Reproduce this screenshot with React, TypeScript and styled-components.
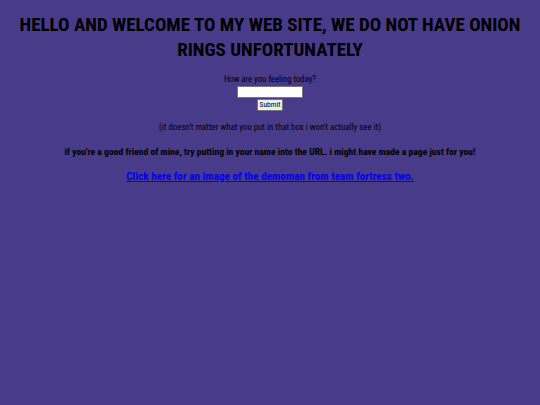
import React from 'react';
import styled, { createGlobalStyle } from 'styled-components';

const GlobalStyle = createGlobalStyle`
  html, body {
    margin: 0;
    padding: 0;
    background-color: #483b8a;
  }
  body {
    font-family: Roboto, 'DejaVu Sans', sans-serif;
    font-stretch: condensed;
    color: #000;
  }
`;

const Page = styled.main`
  min-height: 405px;
  padding: 12px 8px 0;
  text-align: center;
`;

const Title = styled.h1`
  margin: 0 0 12px;
  font-size: 19px;
  font-weight: bold;
  line-height: 25px;
`;

const Form = styled.form`
  display: flex;
  flex-direction: column;
  align-items: center;
  gap: 1px;
`;

const Prompt = styled.label`
  font-size: 8.7px;
  line-height: 11px;
`;

const TextBox = styled.input`
  box-sizing: border-box;
  width: 66px;
  height: 12px;
  margin: 0;
  padding: 0 2px;
  border: 1px solid #767676;
  background: #fff;
  font-size: 8px;
`;

const SubmitButton = styled.button`
  box-sizing: border-box;
  height: 12px;
  margin: 0;
  padding: 0 2px;
  border: 1px solid #767676;
  border-radius: 1px;
  background: #efefef;
  font-family: inherit;
  font-stretch: condensed;
  font-size: 7.5px;
  line-height: 10px;
  color: #000;
`;

const Note = styled.p`
  margin: 11px 0 0;
  font-size: 8.85px;
  line-height: 11px;
`;

const Friend = styled.p`
  margin: 13px 0 0;
  font-size: 9.6px;
  font-weight: bold;
  line-height: 11px;
`;

const DemoLink = styled.a`
  display: inline-block;
  margin-top: 13px;
  font-size: 11.2px;
  font-weight: bold;
  line-height: 13px;
  color: #0000ee;
  text-decoration: underline;
`;

const App = () => (
  <>
    <GlobalStyle />
    <Page>
      <Title>HELLO AND WELCOME TO MY WEB SITE, WE DO NOT HAVE ONION RINGS UNFORTUNATELY</Title>
      <Form onSubmit={e => e.preventDefault()}>
        <Prompt htmlFor="feeling">How are you feeling today?</Prompt>
        <TextBox id="feeling" type="text" />
        <SubmitButton type="submit">Submit</SubmitButton>
      </Form>
      <Note>(it doesn't matter what you put in that box i won't actually see it)</Note>
      <Friend>if you're a good friend of mine, try putting in your name into the URL. i might have made a page just for you!</Friend>
      <DemoLink href="#">Click here for an image of the demoman from team fortress two.</DemoLink>
    </Page>
  </>
);

export default App;
